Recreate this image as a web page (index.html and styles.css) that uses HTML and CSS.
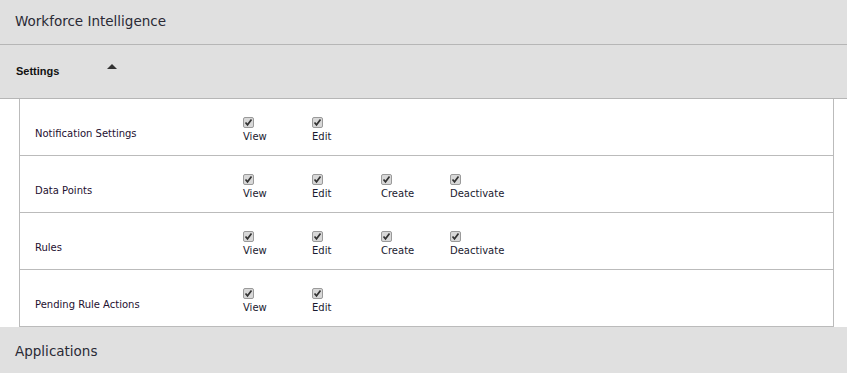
FILE: index.html
```html
<!DOCTYPE html>
<html lang="en">
<head>
  <meta charset="UTF-8" />
  <title>Workforce Intelligence</title>
  <link rel="stylesheet" href="styles.css">
</head>
<body>
  <div class="bar top-bar">Workforce Intelligence</div>

  <div class="bar settings-bar">
    <span class="settings-title">Settings</span>
    <span class="caret"></span>
  </div>

  <div class="panel">
    <div class="perm-row">
      <div class="perm-name">Notification Settings</div>
      <label class="perm"><span class="cb"></span>View</label>
      <label class="perm"><span class="cb"></span>Edit</label>
    </div>
    <div class="perm-row">
      <div class="perm-name">Data Points</div>
      <label class="perm"><span class="cb"></span>View</label>
      <label class="perm"><span class="cb"></span>Edit</label>
      <label class="perm"><span class="cb"></span>Create</label>
      <label class="perm"><span class="cb"></span>Deactivate</label>
    </div>
    <div class="perm-row">
      <div class="perm-name">Rules</div>
      <label class="perm"><span class="cb"></span>View</label>
      <label class="perm"><span class="cb"></span>Edit</label>
      <label class="perm"><span class="cb"></span>Create</label>
      <label class="perm"><span class="cb"></span>Deactivate</label>
    </div>
    <div class="perm-row">
      <div class="perm-name">Pending Rule Actions</div>
      <label class="perm"><span class="cb"></span>View</label>
      <label class="perm"><span class="cb"></span>Edit</label>
    </div>
  </div>

  <div class="bar bottom-bar">Applications</div>
</body>
</html>
```

FILE: styles.css
```css
body {
  margin: 0;
  background: #fff;
  font-family: "DejaVu Sans", Verdana, sans-serif;
  color: #222;
}
.bar {
  background: #e0e0e0;
  box-sizing: border-box;
}
.top-bar {
  height: 45px;
  padding: 13px 0 0 15px;
  font-size: 13.5px;
  color: #2a2a35;
  border-bottom: 1px solid #b6b6b6;
}
.settings-bar {
  height: 54px;
  padding: 20px 0 0 16px;
  display: flex;
  align-items: flex-start;
  border-bottom: 1px solid #b6b6b6;
}
.settings-title {
  font-family: "Liberation Sans", Arial, sans-serif;
  font-weight: bold;
  font-size: 11px;
  color: #111;
  width: 91px;
}
.caret {
  margin-top: -1px;
  width: 0;
  height: 0;
  border-left: 5px solid transparent;
  border-right: 5px solid transparent;
  border-bottom: 5px solid #333;
}
.panel {
  margin: 0 13px 0 19px;
  border: 1px solid #bbb;
  border-top: none;
}
.perm-row {
  height: 57px;
  box-sizing: border-box;
  display: grid;
  grid-template-columns: 208px repeat(4, 69px);
  padding: 18px 0 0 15px;
  border-bottom: 1px solid #bbb;
  font-size: 10px;
}
.perm-row:last-child {
  height: 56px;
  border-bottom: none;
}
.perm-name {
  padding-top: 11px;
  color: #1e1030;
}
.perm {
  display: flex;
  flex-direction: column;
  align-items: flex-start;
  color: #1a1a30;
}
.cb {
  width: 11px;
  height: 11px;
  box-sizing: border-box;
  border: 1px solid #9a9a9a;
  border-radius: 2px;
  background: #d8d8d8 url("data:image/svg+xml,%3Csvg xmlns='http://www.w3.org/2000/svg' width='9' height='9'%3E%3Cpath d='M1.5 4.5 L3.5 6.8 L7.5 1.5' fill='none' stroke='%23333' stroke-width='1.7'/%3E%3C/svg%3E") center no-repeat;
  margin: 0 0 3px 0;
}
.bottom-bar {
  height: 47px;
  padding: 16px 0 0 15px;
  font-size: 13.5px;
  color: #2a2a35;
}
```
